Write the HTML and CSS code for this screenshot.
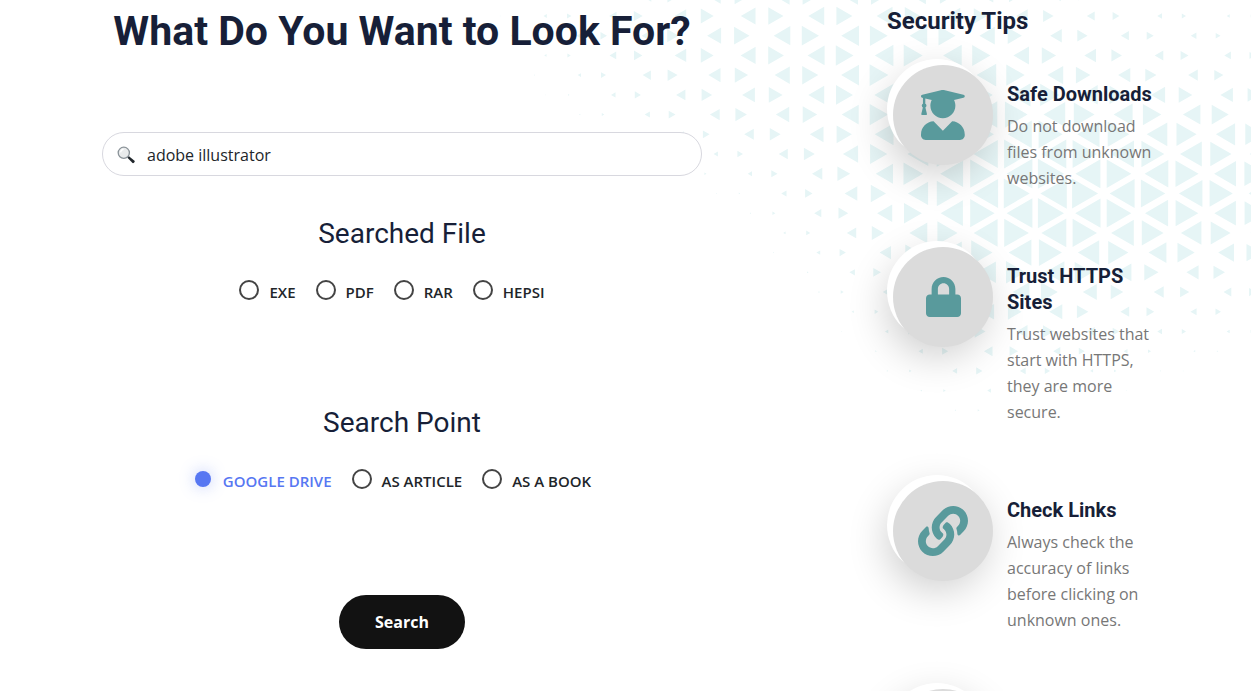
FILE: index.html
```html
<!DOCTYPE html>
<html lang="en">
<head>
<meta charset="utf-8">
<title>File Search</title>
<link rel="stylesheet" href="styles.css">
</head>
<body>
<svg class="pattern" id="pattern" aria-hidden="true"><path id="pattern-path"/></svg>
<main class="page">
  <form class="search" onsubmit="return false">
    <h1 class="search-title">What Do You Want to Look For?</h1>
    <label class="search-box">
      <svg class="search-icon" viewBox="0 0 18 18" role="img" aria-label="Search term">
        <path d="M10.2 11.4l1.5-1.5 5.8 4.8c.9.9-1 3.1-2 2.4z" fill="#20262b"/>
        <circle cx="6.8" cy="6.8" r="5.6" fill="#e9ebec" stroke="#8a9298" stroke-width="1.3"/>
        <path d="M3.6 6.4a3.3 3.3 0 0 1 3-3" fill="none" stroke="#fff" stroke-width="1.3"/>
      </svg>
      <input class="search-input" type="text" value="adobe illustrator">
    </label>
    <fieldset class="group">
      <legend class="group-title">Searched File</legend>
      <div class="options">
        <label class="option"><input class="radio" type="radio" name="file"><span>EXE</span></label>
        <label class="option"><input class="radio" type="radio" name="file"><span>PDF</span></label>
        <label class="option"><input class="radio" type="radio" name="file"><span>RAR</span></label>
        <label class="option"><input class="radio" type="radio" name="file"><span>HEPSI</span></label>
      </div>
    </fieldset>
    <fieldset class="group">
      <legend class="group-title">Search Point</legend>
      <div class="options">
        <label class="option"><input class="radio" type="radio" name="point" checked><span>GOOGLE DRIVE</span></label>
        <label class="option"><input class="radio" type="radio" name="point"><span>AS ARTICLE</span></label>
        <label class="option"><input class="radio" type="radio" name="point"><span>AS A BOOK</span></label>
      </div>
    </fieldset>
    <button class="submit" type="submit">Search</button>
  </form>

  <aside class="tips">
    <h2 class="tips-title">Security Tips</h2>
    <ul class="tip-list">
      <li class="tip">
        <div class="badge"><div class="badge-face">
          <svg class="badge-icon" viewBox="0 0 448 512" aria-hidden="true"><path d="M319.4 320.6L224 416l-95.4-95.4C57.1 323.7 0 382.2 0 454.4v9.6c0 26.5 21.5 48 48 48h352c26.5 0 48-21.5 48-48v-9.6c0-72.2-57.1-130.7-128.6-133.8zM13.6 79.8l6.4 1.5v58.4c-7 4.2-12 11.5-12 20.3 0 8.4 4.6 15.4 11.1 19.7L3.5 242c-1.7 6.9 2.1 14 7.6 14h41.8c5.5 0 9.3-7.1 7.6-14l-15.6-62.3C51.4 175.4 56 168.4 56 160c0-8.8-5-16.1-12-20.3V87.1l66 15.9c-8.6 17.2-14 36.4-14 57 0 70.7 57.3 128 128 128s128-57.3 128-128c0-20.6-5.3-39.8-14-57l96.3-23.2c18.2-4.4 18.2-27.1 0-31.5l-190.4-46c-13-3.1-26.7-3.1-39.7 0L13.6 48.2c-18.1 4.4-18.1 27.2 0 31.6z"/></svg>
        </div></div>
        <div class="tip-text"><h3 class="tip-title">Safe Downloads</h3><p class="tip-desc">Do not download files from unknown websites.</p></div>
      </li>
      <li class="tip">
        <div class="badge"><div class="badge-face">
          <svg class="badge-icon badge-icon-small" viewBox="0 0 448 512" aria-hidden="true"><path d="M400 224h-24v-72C376 68.2 307.8 0 224 0S72 68.2 72 152v72H48c-26.5 0-48 21.5-48 48v192c0 26.5 21.5 48 48 48h352c26.5 0 48-21.5 48-48V272c0-26.5-21.5-48-48-48zm-104 0H152v-72c0-39.7 32.3-72 72-72s72 32.3 72 72v72z"/></svg>
        </div></div>
        <div class="tip-text"><h3 class="tip-title">Trust HTTPS Sites</h3><p class="tip-desc">Trust websites that start with HTTPS, they are more secure.</p></div>
      </li>
      <li class="tip">
        <div class="badge"><div class="badge-face">
          <svg class="badge-icon" viewBox="0 0 512 512" aria-hidden="true"><path d="M326.612 185.391c59.747 59.809 58.927 155.698.36 214.59-.11.12-.24.25-.36.37l-67.2 67.2c-59.27 59.27-155.699 59.262-214.96 0-59.27-59.26-59.27-155.7 0-214.96l37.106-37.106c9.84-9.84 26.786-3.3 27.294 10.606.648 17.722 3.826 35.527 9.69 52.721 1.986 5.822.567 12.262-3.783 16.612l-13.087 13.087c-28.026 28.026-28.905 73.66-1.155 101.96 28.024 28.579 74.086 28.749 102.325.51l67.2-67.19c28.191-28.191 28.073-73.757 0-101.83-3.701-3.694-7.429-6.564-10.341-8.569a16.037 16.037 0 0 1-6.947-12.606c-.396-10.567 3.348-21.456 11.698-29.806l21.054-21.055c5.521-5.521 14.182-6.199 20.584-1.731a152.482 152.482 0 0 1 20.522 17.197zM467.547 44.449c-59.261-59.262-155.69-59.27-214.96 0l-67.2 67.2c-.12.12-.25.25-.36.37-58.566 58.892-59.387 154.781.36 214.59a152.454 152.454 0 0 0 20.521 17.196c6.402 4.468 15.064 3.789 20.584-1.731l21.054-21.055c8.35-8.35 12.094-19.239 11.698-29.806a16.037 16.037 0 0 0-6.947-12.606c-2.912-2.005-6.64-4.875-10.341-8.569-28.073-28.073-28.191-73.639 0-101.83l67.2-67.19c28.239-28.239 74.3-28.069 102.325.51 27.75 28.3 26.872 73.934-1.155 101.96l-13.087 13.087c-4.35 4.35-5.769 10.79-3.783 16.612 5.864 17.194 9.042 34.999 9.69 52.721.509 13.906 17.454 20.446 27.294 10.606l37.106-37.106c59.271-59.259 59.271-155.699.001-214.959z"/></svg>
        </div></div>
        <div class="tip-text"><h3 class="tip-title">Check Links</h3><p class="tip-desc">Always check the accuracy of links before clicking on unknown ones.</p></div>
      </li>
      <li class="tip">
        <div class="badge"><div class="badge-face"></div></div>
      </li>
    </ul>
  </aside>
</main>
<script src="pattern.js"></script>
</body>
</html>
```

FILE: styles.css
```css
* { box-sizing: border-box; }

body {
  position: relative;
  height: 100vh;
  margin: 0;
  overflow: hidden;
  background: #fff;
  color: #212529;
  font-family: "Open Sans", "Noto Sans", sans-serif;
  font-size: 16px;
  line-height: 26px;
}

h1, h2, h3, p, ul, fieldset, legend { margin: 0; padding: 0; }

/* decorative triangles behind the content */
.pattern {
  position: absolute;
  z-index: -1;
  top: 0;
  right: 0;
  width: 771px;
  height: 440px;
  fill: #e6f5f6;
}

.page {
  display: grid;
  grid-template-columns: minmax(0, 1fr) 270px;
  gap: 130px;
  padding: 0 94px 0 47px;
}

.search {
  display: flex;
  flex-direction: column;
  align-items: center;
}

.search-title {
  padding-top: 4px;
  color: #171f38;
  font-family: Roboto, sans-serif;
  font-size: 41px;
  font-weight: 700;
  line-height: 54px;
  white-space: nowrap;
}

.search-box {
  display: flex;
  align-items: center;
  gap: 12px;
  width: 100%;
  max-width: 600px;
  height: 44px;
  margin: 74px 0 41px;
  padding: 2px 14px 0;
  border: 1px solid #d8d8df;
  border-radius: 22px;
  background: #fff;
}

.search-icon { width: 18px; height: 18px; }

.search-input {
  flex: 1;
  min-width: 0;
  padding: 0;
  border: 0;
  outline: 0;
  background: transparent;
  color: #212529;
  font: inherit;
}

.group {
  width: 100%;
  min-width: 0;
  margin-bottom: 102px;
  border: 0;
}

.group-title {
  width: 100%;
  color: #171f38;
  font-family: Roboto, sans-serif;
  font-size: 28px;
  font-weight: 400;
  line-height: 34px;
  text-align: center;
}

.options {
  display: flex;
  justify-content: center;
  padding-top: 29px;
}

.option {
  display: flex;
  align-items: flex-start;
  gap: 10px;
  margin-right: 20px;
  font-size: 15px;
  font-weight: 600;
  line-height: 24px;
}

.radio {
  appearance: none;
  width: 20px;
  height: 20px;
  margin: 0;
  border: 2px solid #444;
  border-radius: 50%;
  background: #fff;
}

.radio:checked {
  width: 16px;
  height: 16px;
  margin: 2px;
  border: 0;
  background: #5777f2;
  box-shadow: 0 0 16px rgba(87, 119, 242, 0.4);
}

.radio:checked + span { color: #5777f2; }

.submit {
  height: 54px;
  padding: 0 36px;
  border: 0;
  border-radius: 27px;
  background: #121212;
  color: #fff;
  font: inherit;
  font-weight: 700;
}

.tips-title {
  color: #171f38;
  font-family: Roboto, sans-serif;
  font-size: 24px;
  font-weight: 700;
  line-height: 42px;
}

.tip-list {
  display: grid;
  gap: 50px;
  padding-top: 17px;
  list-style: none;
}

.tip {
  display: flex;
  gap: 20px;
}

.badge {
  flex: none;
  width: 100px;
  height: 100px;
  padding: 6px 0 0 6px;
  border-radius: 50%;
  background: #fff;
  box-shadow: 0 15px 40px rgba(0, 0, 0, 0.2);
}

.badge-face {
  display: flex;
  align-items: center;
  justify-content: center;
  width: 100px;
  height: 100px;
  border-radius: 50%;
  background: #dbdbdb;
}

.badge-icon {
  height: 50px;
  fill: #599a9c;
}

.badge-icon-small { height: 40px; }

.tip-text { padding-top: 22px; }

.tip-title {
  padding-bottom: 6px;
  color: #171f38;
  font-family: Roboto, sans-serif;
  font-size: 20px;
  font-weight: 700;
}

.tip-desc { color: #777; }
```

FILE: pattern.js
```javascript
// Triangle heights sampled on a grid: 60px steps across, 40px steps down.
const sizes = [
  [1, 5, 9, 13, 16, 17, 17, 16, 13, 11, 7, 4, 2, 1],
  [1, 4, 9, 14, 18, 20, 21, 21, 19, 15, 11, 8, 6, 4],
  [0, 2, 7, 12, 15, 18, 21, 24, 24, 20, 16, 13, 11, 9],
  [0, 0, 3.5, 8, 13, 16, 20, 25, 27, 27, 24, 22, 21, 19],
  [0, 0, 0, 2, 5.5, 11, 18, 24, 28, 30, 28, 27, 25, 23],
  [0, 0, 0, 0, 1, 7, 15, 23, 29, 31, 30, 28, 27, 24],
  [0, 0, 0, 0, 0, 3, 11, 20, 27, 29, 27, 24, 22, 20],
  [0, 0, 0, 0, 0, 0.5, 6, 13, 20, 22, 18, 13.5, 11, 9],
  [0, 0, 0, 0, 0, 0, 2, 8, 14, 15, 10, 7, 5, 4],
  [0, 0, 0, 0, 0, 0, 0.5, 4, 9, 8, 4, 2, 0.6, 0],
  [0, 0, 0, 0, 0, 0, 0, 1, 3, 2.5, 0.5, 0, 0, 0],
  [0, 0, 0, 0, 0, 0, 0, 0, 0, 0, 0, 0, 0, 0]
];

function sizeAt(x, y) {
  const gx = Math.max(0, Math.min(12.99, (x - 20) / 60));
  const gy = Math.max(0, Math.min(10.99, y / 40));
  const i = Math.floor(gx), j = Math.floor(gy);
  const fx = gx - i, fy = gy - j;
  const top = sizes[j][i] * (1 - fx) + sizes[j][i + 1] * fx;
  const bottom = sizes[j + 1][i] * (1 - fx) + sizes[j + 1][i + 1] * fx;
  return top * (1 - fy) + bottom * fy;
}

function triangle(cx, cy, direction) {
  const h = sizeAt(cx, cy);
  if (h < 0.8) return "";
  const depth = h * 0.866;
  const base = cx - direction * depth / 3;
  const tip = cx + direction * depth * 2 / 3;
  return `M${base.toFixed(1)} ${(cy - h / 2).toFixed(1)}V${(cy + h / 2).toFixed(1)}L${tip.toFixed(1)} ${cy.toFixed(1)}z`;
}

const period = 68.3;
const rowHeight = period / Math.sqrt(12);
let d = "";
for (let row = -1; row < 22; row++) {
  const y = 16 + row * rowHeight;
  const shift = row % 2 ? -period / 2 : 0;
  for (let col = -5; col < 9; col++) {
    const x = 282 + shift + col * period;
    d += triangle(x - 11.4, y, -1) + triangle(x + 11.4, y, 1);
  }
}
document.getElementById("pattern-path").setAttribute("d", d);
```
